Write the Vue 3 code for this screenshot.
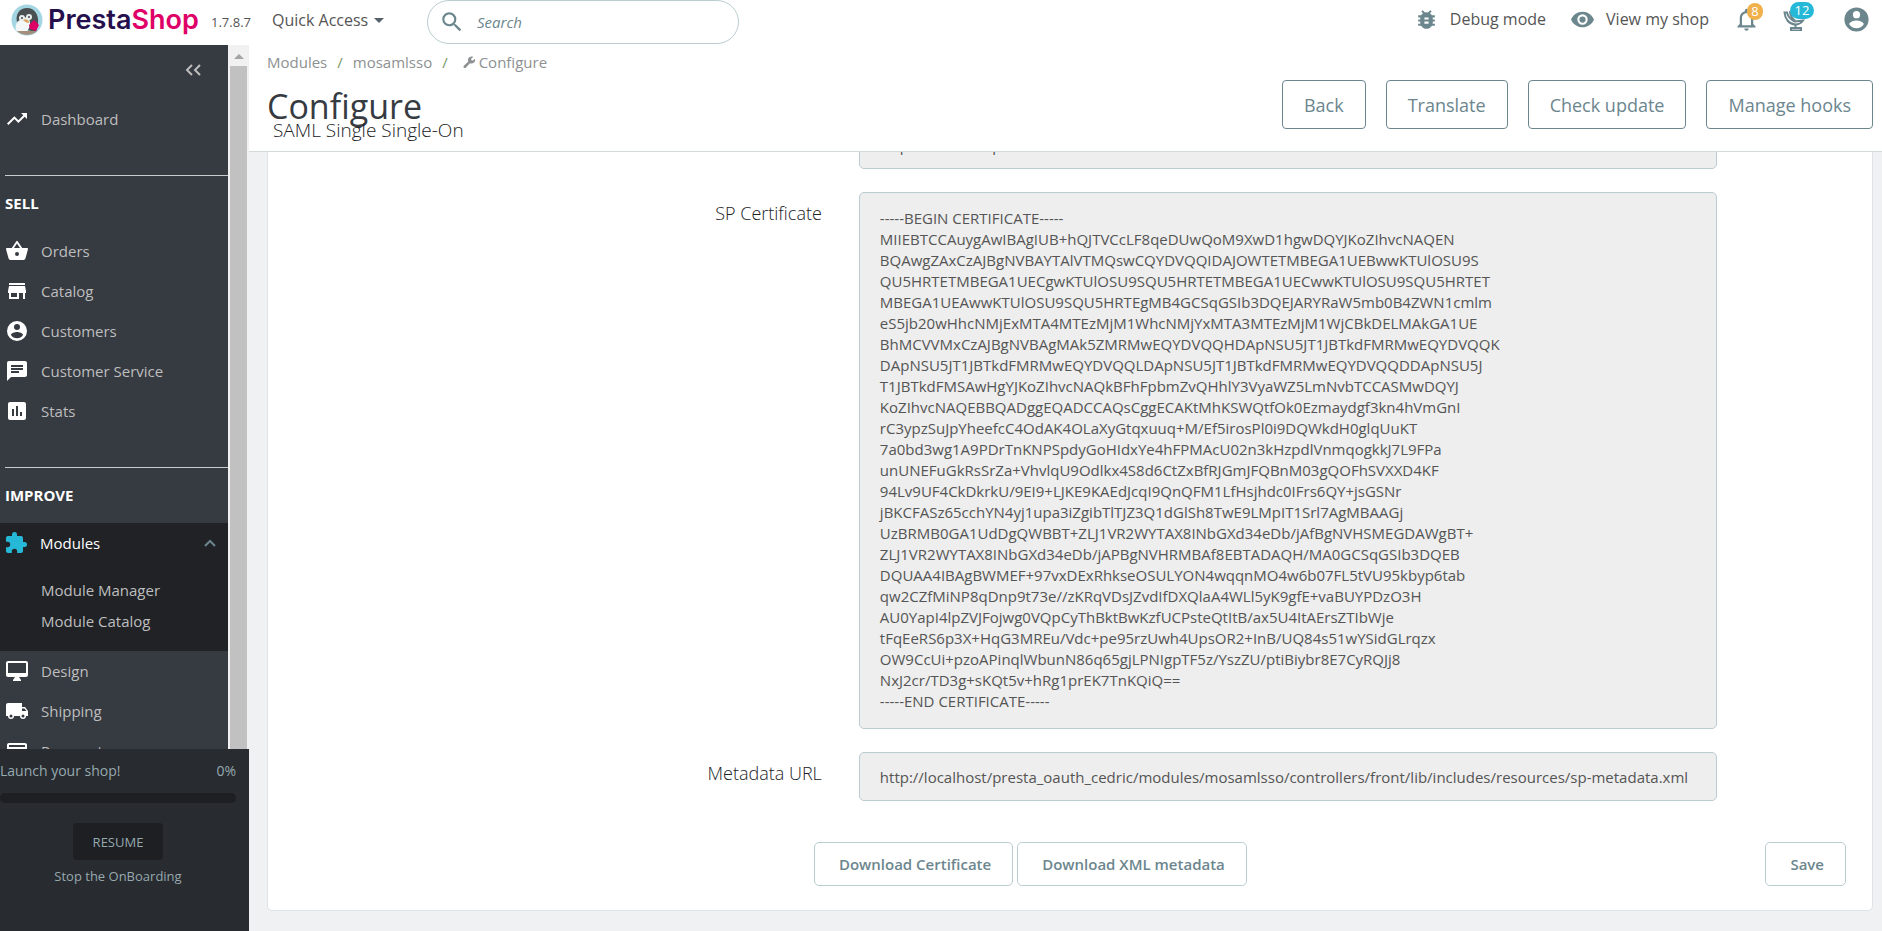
<template>
    <div class="page">
        <header class="topbar">
            <a href="#" class="logo">
                <svg width="32" height="32" viewBox="0 0 32 32" aria-hidden="true">
                    <defs>
                        <clipPath id="badge"><circle cx="16" cy="16" r="15" /></clipPath>
                    </defs>
                    <circle cx="16" cy="16" r="15.5" fill="#a3d6e2" />
                    <g clip-path="url(#badge)">
                        <path d="M6 18C4 10 9 4 16 4c8 0 12 7 11 16l-2 8-9-2z" fill="#4a4f52" />
                        <path d="M5 27c-1-5 0-9 4-11 2-3 6-3 9-1 2 4 1 10-3 13-4 1-8 1-10-1z" fill="#f4f7f7" />
                        <circle cx="11" cy="14" r="3" fill="#e9eeee" />
                        <circle cx="18" cy="13" r="3" fill="#e9eeee" />
                        <circle cx="11" cy="14" r="1" fill="#444" />
                        <circle cx="18" cy="13" r="1" fill="#444" />
                        <path d="M12 16c3-2 6 0 6 3-2 0-4-1-6-3z" fill="#d9a35e" />
                        <path d="M18 21l5-5 5 5-3 6-6-2z" fill="#df0067" />
                        <path d="M5 27h21v5H5z" fill="#a48f7b" />
                    </g>
                </svg>
                <span class="wordmark">Presta<span>Shop</span></span>
            </a>
            <span class="version">1.7.8.7</span>
            <button type="button" class="quick">Quick Access <i class="caret"></i></button>
            <form class="search" @submit.prevent>
                <Icon name="search" :size="26" />
                <input v-model="query" type="text" placeholder="Search" aria-label="Search">
            </form>
            <nav class="tools">
                <a href="#" class="tool debug"><Icon name="bug" :size="25" /><span>Debug mode</span></a>
                <a href="#" class="tool view"><Icon name="eye" :size="25" /><span>View my shop</span></a>
                <button type="button" class="bell" aria-label="Notifications">
                    <Icon name="bell" :size="27" />
                    <span class="badge orange">8</span>
                </button>
                <button type="button" class="trophy" aria-label="Achievements">
                    <svg width="24" height="24" viewBox="0 0 24 24" fill="none" stroke="currentColor" stroke-width="2" aria-hidden="true">
                        <path d="M1.5 5.5H4c1 4 3.5 7 8 9l8-1c-2 3-4.5 4-8 4C6 17 2 12 1.5 5.5zM7 4c0 4 2 7 5 10" />
                        <path d="M12.5 17v3.5M8 21h10v2.5H8z" />
                    </svg>
                    <span class="badge blue">12</span>
                </button>
                <button type="button" class="account" aria-label="Account"><Icon name="account" :size="29" /></button>
            </nav>
        </header>

        <div class="body">
            <aside class="sidebar">
                <div class="menu">
                    <nav class="menu-list">
                        <button type="button" class="collapse" aria-label="Collapse menu">
                            <svg width="16" height="12" viewBox="0 0 16 12" fill="none" stroke="currentColor" stroke-width="2"><path d="M7 1L2 6l5 5M15 1l-5 5 5 5" /></svg>
                        </button>
                        <a href="#" class="item"><Icon name="trend" :size="24" />Dashboard</a>
                        <section v-for="group in menu" :key="group.title" class="group">
                            <h2>{{ group.title }}</h2>
                            <template v-for="item in group.items" :key="item.label">
                                <div v-if="item.children" class="open">
                                    <a href="#" class="item active">
                                        <Icon :name="item.icon" :size="24" />{{ item.label }}
                                        <svg class="chevron" width="12" height="8" viewBox="0 0 12 8" fill="none" stroke="currentColor" stroke-width="2"><path d="M1 7l5-5 5 5" /></svg>
                                    </a>
                                    <a v-for="child in item.children" :key="child" href="#" class="child">{{ child }}</a>
                                </div>
                                <a v-else href="#" class="item"><Icon :name="item.icon" :size="24" />{{ item.label }}</a>
                            </template>
                        </section>
                    </nav>
                    <div class="scrollbar">
                        <i class="arrow"></i>
                        <div class="thumb"></div>
                    </div>
                </div>
                <div class="onboarding">
                    <div class="launch"><span>Launch your shop!</span><span>{{ progress }}%</span></div>
                    <div class="bar"><div :style="{ width: progress + '%' }"></div></div>
                    <button type="button" class="resume">RESUME</button>
                    <a href="#" class="stop">Stop the OnBoarding</a>
                </div>
            </aside>

            <main class="main">
                <div class="page-head">
                    <div>
                        <nav class="breadcrumb">
                            <a href="#">Modules</a><i>/</i><a href="#">mosamlsso</a><i>/</i><Icon name="wrench" :size="13" /><a href="#">Configure</a>
                        </nav>
                        <h1>Configure</h1>
                        <h4>SAML Single Single-On</h4>
                    </div>
                    <div class="actions">
                        <button v-for="action in actions" :key="action" type="button">{{ action }}</button>
                    </div>
                </div>

                <div class="content">
                    <form class="panel" @submit.prevent>
                        <div class="row">
                            <label for="shop"></label>
                            <input id="shop" type="text" readonly aria-label="Shop URL" value="http://localhost/presta">
                        </div>
                        <div class="row">
                            <label for="cert">SP Certificate</label>
                            <textarea id="cert" readonly rows="24" :value="certificate"></textarea>
                        </div>
                        <div class="row">
                            <label for="metadata">Metadata URL</label>
                            <input id="metadata" type="text" readonly value="http://localhost/presta_oauth_cedric/modules/mosamlsso/controllers/front/lib/includes/resources/sp-metadata.xml">
                        </div>
                        <div class="footer">
                            <button type="button">Download Certificate</button>
                            <button type="button">Download XML metadata</button>
                            <button type="submit" class="save">Save</button>
                        </div>
                    </form>
                </div>
            </main>
        </div>
    </div>
</template>

<script setup>
import { h, ref } from 'vue';

const paths = {
    search: 'M15.5 14h-.79l-.28-.27A6.47 6.47 0 0 0 16 9.5 6.5 6.5 0 1 0 9.5 16c1.61 0 3.09-.59 4.23-1.57l.27.28v.79l5 4.99L20.49 19l-4.99-5zm-6 0C7.01 14 5 11.99 5 9.5S7.01 5 9.5 5 14 7.01 14 9.5 11.99 14 9.5 14z',
    bug: 'M20 8h-2.81a5.99 5.99 0 0 0-1.82-1.96L17 4.41 15.59 3l-2.17 2.17a6 6 0 0 0-2.83 0L8.41 3 7 4.41l1.62 1.63C7.88 6.55 7.26 7.22 6.81 8H4v2h2.09c-.05.33-.09.66-.09 1v1H4v2h2v1c0 .34.04.67.09 1H4v2h2.81a6 6 0 0 0 10.38 0H20v-2h-2.09c.05-.33.09-.66.09-1v-1h2v-2h-2v-1c0-.34-.04-.67-.09-1H20V8zm-6 8h-4v-2h4v2zm0-4h-4v-2h4v2z',
    eye: 'M12 4.5C7 4.5 2.73 7.61 1 12c1.73 4.39 6 7.5 11 7.5s9.27-3.11 11-7.5c-1.73-4.39-6-7.5-11-7.5zM12 17a5 5 0 1 1 0-10 5 5 0 0 1 0 10zm0-8a3 3 0 1 0 0 6 3 3 0 0 0 0-6z',
    bell: 'M12 22c1.1 0 2-.9 2-2h-4c0 1.1.9 2 2 2zm6-6v-5c0-3.07-1.63-5.64-4.5-6.32V4a1.5 1.5 0 0 0-3 0v.68C7.64 5.36 6 7.92 6 11v5l-2 2v1h16v-1l-2-2zm-2 1H8v-6c0-2.48 1.51-4.5 4-4.5s4 2.02 4 4.5v6z',
    account: 'M12 2a10 10 0 1 0 0 20 10 10 0 0 0 0-20zm0 3a3 3 0 1 1 0 6 3 3 0 0 1 0-6zm0 14.2a7.2 7.2 0 0 1-6-3.22c.03-1.99 4-3.08 6-3.08s5.97 1.09 6 3.08a7.2 7.2 0 0 1-6 3.22z',
    trend: 'M16 6l2.29 2.29-4.88 4.88-4-4L2 16.59 3.41 18l6-6 4 4 6.3-6.29L22 12V6z',
    basket: 'M17.21 9l-4.38-6.56a1 1 0 0 0-1.66 0L6.79 9H2c-.55 0-1 .45-1 1 0 .09.01.18.04.27l2.54 9.27c.23.84 1 1.46 1.92 1.46h13c.92 0 1.69-.62 1.93-1.46l2.54-9.27L23 10c0-.55-.45-1-1-1h-4.79zM9 9l3-4.4L15 9H9zm3 8a2 2 0 1 1 0-4 2 2 0 0 1 0 4z',
    store: 'M20 4H4v2h16V4zm1 10v-2l-1-5H4l-1 5v2h1v6h10v-6h4v6h2v-6h1zm-9 4H6v-4h6v4z',
    message: 'M20 2H4c-1.1 0-1.99.9-1.99 2L2 22l4-4h14c1.1 0 2-.9 2-2V4c0-1.1-.9-2-2-2zM6 9h12v2H6V9zm8 5H6v-2h8v2zm4-6H6V6h12v2z',
    stats: 'M19 3H5c-1.1 0-2 .9-2 2v14c0 1.1.9 2 2 2h14c1.1 0 2-.9 2-2V5c0-1.1-.9-2-2-2zM9 17H7v-7h2v7zm4 0h-2V7h2v10zm4 0h-2v-4h2v4z',
    puzzle: 'M20.5 11H19V7c0-1.1-.9-2-2-2h-4V3.5a2.5 2.5 0 0 0-5 0V5H4c-1.1 0-1.99.9-1.99 2v3.8H3.5a2.7 2.7 0 0 1 0 5.4H2V20c0 1.1.9 2 2 2h3.8v-1.5a2.7 2.7 0 0 1 5.4 0V22H17c1.1 0 2-.9 2-2v-4h1.5a2.5 2.5 0 0 0 0-5z',
    desktop: 'M21 2H3c-1.1 0-2 .9-2 2v12c0 1.1.9 2 2 2h7l-2 3v1h8v-1l-2-3h7c1.1 0 2-.9 2-2V4c0-1.1-.9-2-2-2zm0 12H3V4h18v10z',
    truck: 'M20 8h-3V4H3c-1.1 0-2 .9-2 2v11h2a3 3 0 0 0 6 0h6a3 3 0 0 0 6 0h2v-5l-3-4zM6 18.5a1.5 1.5 0 1 1 0-3 1.5 1.5 0 0 1 0 3zm13.5-9l1.96 2.5H17V9.5h2.5zm-1.5 9a1.5 1.5 0 1 1 0-3 1.5 1.5 0 0 1 0 3z',
    card: 'M20 4H4c-1.11 0-1.99.89-1.99 2L2 18c0 1.11.89 2 2 2h16c1.11 0 2-.89 2-2V6c0-1.11-.89-2-2-2zm0 14H4v-6h16v6zm0-10H4V6h16v2z',
    wrench: 'M22.5 7.5c-.2 4-3.5 7-7.5 6.5-1 0-1.5-.2-2.2-.5L5 21.5c-1 1-2.5 1-3.4 0s-1-2.5 0-3.4l8.2-8C8 5.5 11 1.2 15.5 1c1.5 0 2.5.2 3.5.7l-4 3.3.5 3 3 .5L22 5c.4.8.5 1.6.5 2.5z'
};

const Icon = (props) => h('svg', {
    class: 'icon', width: props.size, height: props.size, viewBox: '0 0 24 24', fill: 'currentColor', 'aria-hidden': 'true'
}, [h('path', { d: paths[props.name], 'fill-rule': 'evenodd' })]);
Icon.props = ['name', 'size'];

const query = ref('');
const progress = ref(0);
const actions = ['Back', 'Translate', 'Check update', 'Manage hooks'];

const menu = [
    {
        title: 'SELL',
        items: [
            { label: 'Orders', icon: 'basket' },
            { label: 'Catalog', icon: 'store' },
            { label: 'Customers', icon: 'account' },
            { label: 'Customer Service', icon: 'message' },
            { label: 'Stats', icon: 'stats' }
        ]
    },
    {
        title: 'IMPROVE',
        items: [
            { label: 'Modules', icon: 'puzzle', children: ['Module Manager', 'Module Catalog'] },
            { label: 'Design', icon: 'desktop' },
            { label: 'Shipping', icon: 'truck' },
            { label: 'Payment', icon: 'card' }
        ]
    }
];

const certificate = `-----BEGIN CERTIFICATE-----
MIIEBTCCAuygAwIBAgIUB+hQJTVCcLF8qeDUwQoM9XwD1hgwDQYJKoZIhvcNAQEN
BQAwgZAxCzAJBgNVBAYTAlVTMQswCQYDVQQIDAJOWTETMBEGA1UEBwwKTUlOSU9S
QU5HRTETMBEGA1UECgwKTUlOSU9SQU5HRTETMBEGA1UECwwKTUlOSU9SQU5HRTET
MBEGA1UEAwwKTUlOSU9SQU5HRTEgMB4GCSqGSIb3DQEJARYRaW5mb0B4ZWN1cmlm
eS5jb20wHhcNMjExMTA4MTEzMjM1WhcNMjYxMTA3MTEzMjM1WjCBkDELMAkGA1UE
BhMCVVMxCzAJBgNVBAgMAk5ZMRMwEQYDVQQHDApNSU5JT1JBTkdFMRMwEQYDVQQK
DApNSU5JT1JBTkdFMRMwEQYDVQQLDApNSU5JT1JBTkdFMRMwEQYDVQQDDApNSU5J
T1JBTkdFMSAwHgYJKoZIhvcNAQkBFhFpbmZvQHhlY3VyaWZ5LmNvbTCCASMwDQYJ
KoZIhvcNAQEBBQADggEQADCCAQsCggECAKtMhKSWQtfOk0Ezmaydgf3kn4hVmGnI
rC3ypzSuJpYheefcC4OdAK4OLaXyGtqxuuq+M/Ef5irosPl0i9DQWkdH0glqUuKT
7a0bd3wg1A9PDrTnKNPSpdyGoHIdxYe4hFPMAcU02n3kHzpdlVnmqogkkJ7L9FPa
unUNEFuGkRsSrZa+VhvlqU9Odlkx4S8d6CtZxBfRJGmJFQBnM03gQOFhSVXXD4KF
94Lv9UF4CkDkrkU/9EI9+LJKE9KAEdJcqI9QnQFM1LfHsjhdc0IFrs6QY+jsGSNr
jBKCFASz65cchYN4yj1upa3iZgibTlTJZ3Q1dGlSh8TwE9LMpIT1Srl7AgMBAAGj
UzBRMB0GA1UdDgQWBBT+ZLJ1VR2WYTAX8INbGXd34eDb/jAfBgNVHSMEGDAWgBT+
ZLJ1VR2WYTAX8INbGXd34eDb/jAPBgNVHRMBAf8EBTADAQH/MA0GCSqGSIb3DQEB
DQUAA4IBAgBWMEF+97vxDExRhkseOSULYON4wqqnMO4w6b07FL5tVU95kbyp6tab
qw2CZfMiNP8qDnp9t73e//zKRqVDsJZvdIfDXQlaA4WLl5yK9gfE+vaBUYPDzO3H
AU0YapI4lpZVJFojwg0VQpCyThBktBwKzfUCPsteQtItB/ax5U4ItAErsZTIbWje
tFqEeRS6p3X+HqG3MREu/Vdc+pe95rzUwh4UpsOR2+InB/UQ84s51wYSidGLrqzx
OW9CcUi+pzoAPinqlWbunN86q65gjLPNIgpTF5z/YszZU/ptiBiybr8E7CyRQJj8
NxJ2cr/TD3g+sKQt5v+hRg1prEK7TnKQiQ==
-----END CERTIFICATE-----`;
</script>

<style>
body {
    background: #eff1f2;
}
</style>

<style scoped>
* {
    box-sizing: border-box;
}

.page {
    display: flex;
    flex-direction: column;
    height: 100vh;
    overflow: hidden;
    color: #363a41;
    font-family: "Open Sans", "Noto Sans", sans-serif;
    font-size: 15px;
    line-height: 22px;
}

button,
input,
textarea {
    font: inherit;
    color: inherit;
    background: none;
    border: none;
    padding: 0;
    margin: 0;
}

button {
    cursor: pointer;
}

a {
    color: inherit;
    text-decoration: none;
}

svg {
    flex: none;
    display: block;
}

/* Top bar */
.topbar {
    display: flex;
    align-items: flex-start;
    height: 45px;
    flex: none;
    padding: 0 11px;
    background: #fff;
    color: #6c868e;
}

.logo {
    display: flex;
    align-items: center;
    gap: 5px;
    padding-top: 4px;
}

.wordmark {
    width: 151px;
    font-family: Inter, "Open Sans", sans-serif;
    font-size: 27px;
    font-weight: 600;
    line-height: 32px;
    color: #250f4d;
}

.wordmark span {
    color: #df0067;
}

.version {
    margin: 11px 0 0 12px;
    width: 61px;
    font-size: 13px;
    color: #555;
}

.quick {
    display: flex;
    align-items: center;
    gap: 6px;
    padding-top: 9px;
    width: 155px;
    font-size: 16px;
    color: #555;
}

.caret {
    border: 5px solid transparent;
    border-top-color: #54606a;
    border-bottom: 0;
}

.search {
    display: flex;
    align-items: center;
    gap: 12px;
    width: 312px;
    height: 44px;
    padding: 0 11px;
    border: 1px solid #bbcdd2;
    border-radius: 22px;
}

.search input {
    flex: 1;
    min-width: 0;
    outline: none;
}

.search input::placeholder {
    color: #6c868e;
    font-style: italic;
    opacity: 1;
}

.tools {
    display: flex;
    align-items: center;
    height: 38px;
    margin-left: auto;
}

.tool {
    display: flex;
    align-items: center;
    gap: 11px;
    margin-right: 24px;
    font-size: 16px;
}

.tool span {
    color: #555;
}

.bell,
.trophy {
    position: relative;
    margin-right: 23px;
}

.trophy {
    margin-right: 35px;
}

.badge {
    position: absolute;
    height: 17px;
    border-radius: 9px;
    color: #fff;
    font-size: 13px;
    line-height: 17px;
    text-align: center;
}

.orange {
    top: -3px;
    left: 14px;
    width: 16px;
    background: #f0b04a;
}

.blue {
    top: -5px;
    left: 7px;
    width: 24px;
    background: #25b9d7;
}

/* Sidebar */
.body {
    display: flex;
    flex: 1;
    min-height: 0;
}

.sidebar {
    display: flex;
    flex-direction: column;
    width: 249px;
    flex: none;
}

.menu {
    display: flex;
    flex: 1;
    min-height: 0;
    overflow: hidden;
}

.menu-list {
    flex: 1;
    background: #363a41;
    color: #bebebe;
}

.collapse {
    display: flex;
    align-items: center;
    height: 50px;
    margin: 0 27px 4px auto;
}

.item {
    display: flex;
    align-items: center;
    gap: 12px;
    height: 40px;
    padding-left: 5px;
}

.item .icon {
    color: #fff;
}

.item.active {
    padding-left: 4px;
    color: #fff;
    font-weight: 500;
}

.item.active .icon {
    color: #25b9d7;
}

.chevron {
    margin: 0 12px 0 auto;
    color: #6c868e;
}

.group {
    margin-top: 36px;
}

.group h2 {
    margin: 0 0 0 5px;
    border-top: 1px solid #c9cbcd;
    font-size: 15px;
    font-weight: 700;
    line-height: 55px;
    color: #fff;
}

.open {
    padding-bottom: 14px;
    background: #202226;
}

.child {
    display: block;
    padding-left: 41px;
    line-height: 31px;
}

.open .item {
    margin-bottom: 12px;
}

.scrollbar {
    display: flex;
    flex-direction: column;
    width: 21px;
    padding: 0 2px;
    background: #f1f1f1;
}

.arrow {
    align-self: center;
    margin: 9px 0 7px;
    border: 5px solid transparent;
    border-bottom-color: #a3a3a3;
    border-top: 0;
}

.thumb {
    flex: 1;
    background: #c1c1c1;
}

.onboarding {
    display: flex;
    flex-direction: column;
    align-items: center;
    flex: none;
    height: 182px;
    padding: 11px 13px 0 0;
    background: #282b30;
    color: #96a9af;
    font-size: 14px;
}

.launch {
    display: flex;
    justify-content: space-between;
    width: 100%;
}

.bar {
    width: 100%;
    height: 10px;
    margin: 11px 0 20px;
    border-radius: 5px;
    background: #1d1f23;
}

.resume {
    width: 90px;
    height: 37px;
    margin-bottom: 5px;
    border-radius: 4px;
    background: #1d1f23;
    font-size: 13px;
    font-weight: 500;
}

.stop {
    font-size: 13px;
    font-weight: 500;
}

/* Page header */
.main {
    display: flex;
    flex-direction: column;
    flex: 1;
    min-width: 0;
}

.page-head {
    display: flex;
    justify-content: space-between;
    align-items: flex-start;
    height: 107px;
    flex: none;
    padding: 6px 9px 0 18px;
    background: #fff;
    border-bottom: 1px solid #d3d8db;
}

.breadcrumb {
    display: flex;
    align-items: center;
    margin-bottom: 18px;
    color: #8d9192;
}

.breadcrumb i {
    margin: 0 10px;
    font-style: normal;
    color: #7a9668;
}

.breadcrumb .icon {
    margin: 0 3px 0 5px;
}

h1,
h4 {
    margin: 0;
}

h1 {
    font-size: 34px;
    font-weight: 400;
    line-height: 30px;
}

h4 {
    margin-left: 6px;
    font-size: 19px;
    font-weight: 300;
    line-height: 18px;
    color: #202226;
}

.actions {
    display: flex;
    gap: 20px;
    padding-top: 29px;
}

.actions button {
    height: 49px;
    padding: 0 21px;
    border: 1px solid #6c868e;
    border-radius: 4px;
    color: #6c868e;
    font-size: 18px;
    font-weight: 500;
}

/* Settings panel, scrolled to its end */
.content {
    display: flex;
    flex-direction: column;
    justify-content: flex-end;
    flex: 1;
    min-height: 0;
    overflow: hidden;
    padding: 0 9px 20px 18px;
    background: #eff1f2;
}

.panel {
    padding: 24px 26px;
    background: #fff;
    border: 1px solid #dfe4e7;
    border-radius: 5px;
}

.row {
    display: grid;
    grid-template-columns: 40fr 65fr 7fr;
    gap: 37px;
    margin-bottom: 23px;
}

.row label {
    padding-top: 10px;
    font-size: 18px;
    font-weight: 300;
    text-align: right;
    color: #202226;
}

.row input,
.row textarea {
    display: block;
    width: 100%;
    padding: 0 20px;
    background: #eee;
    border: 1px solid #bbcdd2;
    border-radius: 5px;
    color: #555;
    outline: none;
}

.row input {
    height: 49px;
}

.row textarea {
    padding: 15px 20px 16px;
    line-height: 21px;
    resize: none;
    overflow: hidden;
}

.footer {
    display: flex;
    gap: 4px;
    margin-top: 41px;
    padding-left: 33.5%;
}

.footer button {
    height: 44px;
    padding: 0 21px 0 24px;
    border: 1px solid #bbcdd2;
    border-radius: 5px;
    color: #6c868e;
    font-weight: 600;
}

.footer .save {
    margin-left: auto;
}
</style>
